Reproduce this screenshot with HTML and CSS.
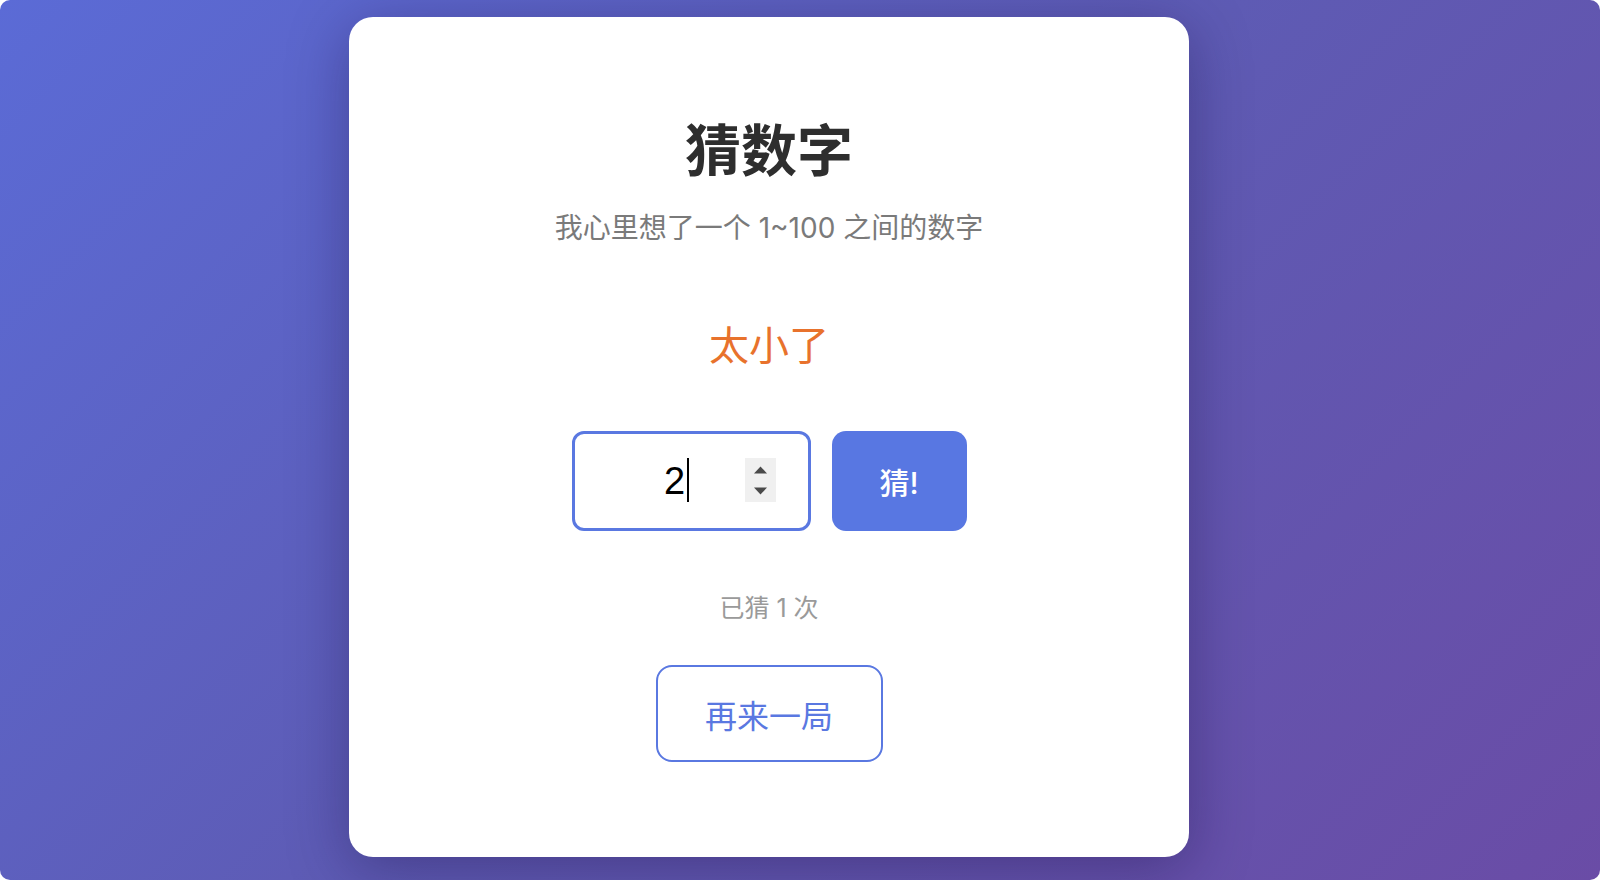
FILE: index.html
```html
<!DOCTYPE html>
<html lang="zh-CN">
<head>
<meta charset="utf-8">
<title>猜数字</title>
<link rel="stylesheet" href="styles.css">
</head>
<body>
<div class="window">
  <div class="card">
    <h1 class="title">猜数字</h1>
    <p class="subtitle">我心里想了一个 1~100 之间的数字</p>
    <p class="result">太小了</p>
    <div class="guess-row">
      <div class="input-wrap">
        <input class="num" type="number" value="2" min="1" max="100">
        <span class="caret"></span>
        <span class="spinner">
          <svg width="31" height="44" viewBox="0 0 31 44">
            <path d="M9 15.5 L15.5 8.5 L22 15.5 Z" fill="#4a4a4a"/>
            <path d="M9 29.5 L22 29.5 L15.5 36.5 Z" fill="#4a4a4a"/>
          </svg>
        </span>
      </div>
      <button class="guess-btn">猜!</button>
    </div>
    <p class="count">已猜 1 次</p>
    <button class="restart">再来一局</button>
  </div>
</div>
</body>
</html>
```

FILE: styles.css
```css
html {
  background: #ffffff;
}
body {
  margin: 0;
  font-family: "Inter", "Noto Sans CJK SC", sans-serif;
}
.window {
  width: 1600px;
  height: 880px;
  border-radius: 10px;
  overflow: hidden;
  background: linear-gradient(135deg, #5b6bd6 0%, #5e5bb4 50%, #6a4ca6 100%);
  padding: 17px 0 0 349px;
  box-sizing: border-box;
}
.card {
  width: 840px;
  height: 840px;
  box-sizing: border-box;
  background: #ffffff;
  border-radius: 24px;
  box-shadow: 0 12px 60px rgba(20, 10, 60, 0.35);
  padding-top: 101px;
  text-align: center;
}
.title {
  margin: 0;
  font-size: 56px;
  line-height: 67px;
  font-weight: 700;
  color: #2e2e2e;
}
.subtitle {
  margin: 23px 0 0;
  font-size: 28px;
  line-height: 40px;
  color: #7a7a7a;
}
.result {
  margin: 70px 0 0;
  font-size: 40px;
  line-height: 56px;
  color: #e8722c;
}
.guess-row {
  margin-top: 57px;
  display: flex;
  justify-content: center;
  gap: 21px;
}
.input-wrap {
  position: relative;
  width: 239px;
  height: 100px;
}
.num {
  width: 239px;
  height: 100px;
  box-sizing: border-box;
  border: 3px solid #5a78e1;
  border-radius: 12px;
  outline: none;
  padding: 0 49px 0 16px;
  font-family: "Liberation Sans", Arial, sans-serif;
  font-size: 38px;
  color: #000;
  text-align: center;
  background: #fff;
  -moz-appearance: textfield;
}
.num::-webkit-inner-spin-button,
.num::-webkit-outer-spin-button {
  -webkit-appearance: none;
  margin: 0;
}
.caret {
  position: absolute;
  left: 115px;
  top: 27px;
  width: 2px;
  height: 44px;
  background: #000;
}
.spinner {
  position: absolute;
  left: 173px;
  top: 27px;
  width: 31px;
  height: 44px;
  background: #f0f0f0;
  display: block;
}
.spinner svg {
  display: block;
}
.guess-btn {
  width: 135px;
  height: 100px;
  border: none;
  border-radius: 14px;
  background: #5877e2;
  color: #ffffff;
  font-family: "Inter", "Noto Sans CJK SC", sans-serif;
  font-size: 30px;
  font-weight: 500;
  padding: 0;
}
.count {
  margin: 60px 0 0;
  font-size: 25px;
  line-height: 34px;
  color: #9a9a9a;
}
.restart {
  margin-top: 40px;
  width: 227px;
  height: 97px;
  box-sizing: border-box;
  border: 2px solid #5a78e1;
  border-radius: 16px;
  background: #ffffff;
  color: #5a78e1;
  font-family: "Inter", "Noto Sans CJK SC", sans-serif;
  font-size: 32px;
  padding: 0;
}
```
